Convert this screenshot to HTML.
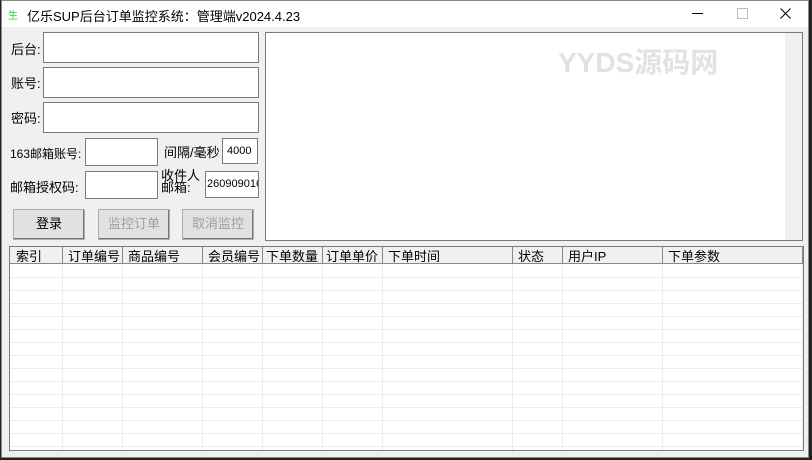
<!DOCTYPE html><html><head><meta charset="utf-8"><style>
body{margin:0;width:812px;height:460px;background:#222;position:relative;overflow:hidden;font-family:"Liberation Sans","Noto Sans CJK SC",sans-serif;font-size:12px;color:#000}
.win{position:absolute;left:1px;top:0;width:808px;height:458px;background:#f0f0f0;border:1px solid #888;box-sizing:border-box}
.title{position:absolute;left:0;top:0;right:0;height:26px;background:#fff}
.a{position:absolute}
.in{position:absolute;background:#fff;border:1px solid #7a7a7a;box-sizing:border-box}
.btn{position:absolute;border:1px solid #adadad;background:#e1e1e1;box-sizing:border-box;text-align:center;line-height:28px;font-size:13px;box-shadow:inset -1px -1px 0 #777}
.dis{color:#a0a0a0}
.lbl{position:absolute;font-size:13px}
</style></head><body>
<div class="win">
<div class="title">
<div class="a" style="left:6px;top:6px;color:#3c3;font-size:10px">生</div>
<div class="a" style="left:25px;top:5px;font-size:13px">亿乐SUP后台订单监控系统：管理端v2024.4.23</div>
<div class="a" style="left:690px;top:12px;width:11px;border-top:1px solid #000"></div>
<div class="a" style="left:735px;top:7px;width:9px;height:9px;border:1px solid #bbb"></div>
<svg class="a" style="left:778px;top:7px" width="11" height="11"><path d="M0.5 0.5L10.5 10.5M10.5 0.5L0.5 10.5" stroke="#000" stroke-width="1"/></svg>
</div>
<div class="lbl" style="left:9px;top:38px">后台:</div>
<div class="in" style="left:41px;top:31px;width:216px;height:31px"></div>
<div class="lbl" style="left:9px;top:72px">账号:</div>
<div class="in" style="left:41px;top:66px;width:216px;height:31px"></div>
<div class="lbl" style="left:9px;top:107px">密码:</div>
<div class="in" style="left:41px;top:101px;width:216px;height:31px"></div>
<div class="lbl" style="left:8px;top:144px;font-size:12px">163邮箱账号:</div>
<div class="in" style="left:83px;top:137px;width:73px;height:28px"></div>
<div class="lbl" style="left:162px;top:141px">间隔/毫秒</div>
<div class="in" style="left:220px;top:137px;width:36px;height:26px;font-size:11px;padding:6px 0 0 4px">4000</div>
<div class="lbl" style="left:8px;top:176px">邮箱授权码:</div>
<div class="in" style="left:83px;top:170px;width:73px;height:28px"></div>
<div class="lbl" style="left:159px;top:169px;line-height:12px">收件人<br>邮箱:</div>
<div class="in" style="left:203px;top:170px;width:54px;height:27px;font-size:11px;padding:6px 0 0 1px;overflow:hidden;white-space:nowrap">260909016</div>
<div class="btn" style="left:11px;top:208px;width:72px;height:31px">登录</div>
<div class="btn dis" style="left:96px;top:208px;width:72px;height:31px">监控订单</div>
<div class="btn dis" style="left:180px;top:208px;width:72px;height:31px">取消监控</div>
<div class="in" style="left:263px;top:31px;width:538px;height:209px">
<div class="a" style="left:292px;top:8px;font-size:28px;font-weight:bold;color:#e2e2e2">YYDS源码网</div>
<div class="a" style="right:0;top:0;width:17px;height:207px;background:#f0f0f0"></div>
</div>
<div class="in" style="left:7px;top:245px;width:795px;height:205px;overflow:hidden">
<svg width="795" height="205" style="position:absolute;left:0;top:0">
<rect x="0" y="0" width="795" height="17" fill="#f0f0f0"/>
<g stroke="#ececec">
<line x1="0" x2="794" y1="30.5" y2="30.5"/><line x1="0" x2="794" y1="43.5" y2="43.5"/><line x1="0" x2="794" y1="56.5" y2="56.5"/><line x1="0" x2="794" y1="69.5" y2="69.5"/><line x1="0" x2="794" y1="82.5" y2="82.5"/><line x1="0" x2="794" y1="95.5" y2="95.5"/><line x1="0" x2="794" y1="108.5" y2="108.5"/><line x1="0" x2="794" y1="121.5" y2="121.5"/><line x1="0" x2="794" y1="134.5" y2="134.5"/><line x1="0" x2="794" y1="147.5" y2="147.5"/><line x1="0" x2="794" y1="160.5" y2="160.5"/><line x1="0" x2="794" y1="173.5" y2="173.5"/><line x1="0" x2="794" y1="186.5" y2="186.5"/><line x1="0" x2="794" y1="199.5" y2="199.5"/>
<line x1="52.5" x2="52.5" y1="17" y2="205"/><line x1="112.5" x2="112.5" y1="17" y2="205"/><line x1="192.5" x2="192.5" y1="17" y2="205"/><line x1="252.5" x2="252.5" y1="17" y2="205"/><line x1="312.5" x2="312.5" y1="17" y2="205"/><line x1="372.5" x2="372.5" y1="17" y2="205"/><line x1="502.5" x2="502.5" y1="17" y2="205"/><line x1="552.5" x2="552.5" y1="17" y2="205"/><line x1="652.5" x2="652.5" y1="17" y2="205"/><line x1="792.5" x2="792.5" y1="17" y2="205"/>
</g>
<g stroke="#888"><line x1="0" x2="795" y1="16.5" y2="16.5"/>
<line x1="52.5" x2="52.5" y1="0" y2="16"/><line x1="112.5" x2="112.5" y1="0" y2="16"/><line x1="192.5" x2="192.5" y1="0" y2="16"/><line x1="252.5" x2="252.5" y1="0" y2="16"/><line x1="312.5" x2="312.5" y1="0" y2="16"/><line x1="372.5" x2="372.5" y1="0" y2="16"/><line x1="502.5" x2="502.5" y1="0" y2="16"/><line x1="552.5" x2="552.5" y1="0" y2="16"/><line x1="652.5" x2="652.5" y1="0" y2="16"/><line x1="792.5" x2="792.5" y1="0" y2="16"/></g>
<g font-size="13" font-family="Liberation Sans,Noto Sans CJK SC,sans-serif">
<text x="6" y="14">索引</text><text x="58" y="14">订单编号</text><text x="118" y="14">商品编号</text><text x="198" y="14">会员编号</text><text x="256" y="14">下单数量</text><text x="316" y="14">订单单价</text><text x="378" y="14">下单时间</text><text x="508" y="14">状态</text><text x="558" y="14">用户IP</text><text x="658" y="14">下单参数</text>
</g></svg>
</div>
</div>
</body></html>
